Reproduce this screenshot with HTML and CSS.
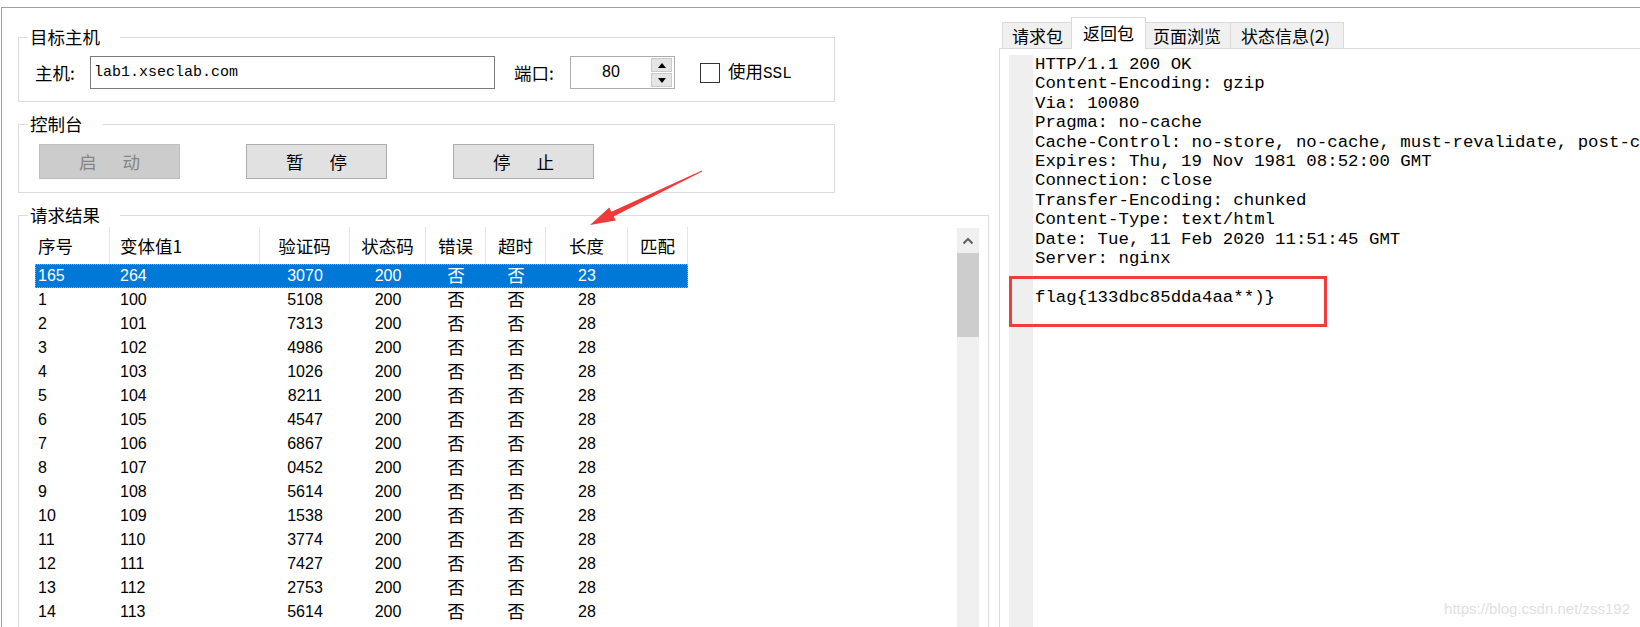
FILE: index.html
```html
<!DOCTYPE html>
<html lang="zh-CN">
<head>
    <meta charset="UTF-8">
    <title>验证码识别爆破</title>
    <link rel="stylesheet" href="styles.css">
</head>
<body>
    <div class="window">
        <div class="left">
            <div class="group group-host">
                <span class="group-title">目标主机</span>
                <div class="host-row">
                    <span class="label host-label">主机:</span>
                    <div class="textbox">lab1.xseclab.com</div>
                    <span class="label port-label">端口:</span>
                    <div class="spin">
                        <span class="spin-value">80</span>
                        <div class="spin-btns">
                            <span class="spin-btn"><svg width="8" height="5" viewBox="0 0 8 5"><path d="M0 5 L4 0 L8 5 Z" fill="#000"/></svg></span>
                            <span class="spin-btn"><svg width="8" height="5" viewBox="0 0 8 5"><path d="M0 0 L8 0 L4 5 Z" fill="#000"/></svg></span>
                        </div>
                    </div>
                    <span class="checkbox"></span>
                    <span class="label ssl-label">使用<span class="latin">SSL</span></span>
                </div>
            </div>

            <div class="group group-console">
                <span class="group-title">控制台</span>
                <div class="btn-row">
                    <button class="btn" disabled><span>启</span><span>动</span></button>
                    <button class="btn"><span>暂</span><span>停</span></button>
                    <button class="btn"><span>停</span><span>止</span></button>
                </div>
            </div>

            <div class="group group-result">
                <span class="group-title">请求结果</span>
                <div class="list">
                    <div class="grid">
                        <div class="row head">
                            <div class="c">序号</div><div class="c">变体值1</div><div class="c">验证码</div><div class="c">状态码</div><div class="c">错误</div><div class="c">超时</div><div class="c">长度</div><div class="c">匹配</div>
                        </div>
                        <div class="row sel">
                            <div class="c">165</div><div class="c">264</div><div class="c">3070</div><div class="c">200</div><div class="c">否</div><div class="c">否</div><div class="c">23</div><div class="c"></div>
                        </div>
                        <div class="row"><div class="c">1</div><div class="c">100</div><div class="c">5108</div><div class="c">200</div><div class="c">否</div><div class="c">否</div><div class="c">28</div><div class="c"></div></div>
                        <div class="row"><div class="c">2</div><div class="c">101</div><div class="c">7313</div><div class="c">200</div><div class="c">否</div><div class="c">否</div><div class="c">28</div><div class="c"></div></div>
                        <div class="row"><div class="c">3</div><div class="c">102</div><div class="c">4986</div><div class="c">200</div><div class="c">否</div><div class="c">否</div><div class="c">28</div><div class="c"></div></div>
                        <div class="row"><div class="c">4</div><div class="c">103</div><div class="c">1026</div><div class="c">200</div><div class="c">否</div><div class="c">否</div><div class="c">28</div><div class="c"></div></div>
                        <div class="row"><div class="c">5</div><div class="c">104</div><div class="c">8211</div><div class="c">200</div><div class="c">否</div><div class="c">否</div><div class="c">28</div><div class="c"></div></div>
                        <div class="row"><div class="c">6</div><div class="c">105</div><div class="c">4547</div><div class="c">200</div><div class="c">否</div><div class="c">否</div><div class="c">28</div><div class="c"></div></div>
                        <div class="row"><div class="c">7</div><div class="c">106</div><div class="c">6867</div><div class="c">200</div><div class="c">否</div><div class="c">否</div><div class="c">28</div><div class="c"></div></div>
                        <div class="row"><div class="c">8</div><div class="c">107</div><div class="c">0452</div><div class="c">200</div><div class="c">否</div><div class="c">否</div><div class="c">28</div><div class="c"></div></div>
                        <div class="row"><div class="c">9</div><div class="c">108</div><div class="c">5614</div><div class="c">200</div><div class="c">否</div><div class="c">否</div><div class="c">28</div><div class="c"></div></div>
                        <div class="row"><div class="c">10</div><div class="c">109</div><div class="c">1538</div><div class="c">200</div><div class="c">否</div><div class="c">否</div><div class="c">28</div><div class="c"></div></div>
                        <div class="row"><div class="c">11</div><div class="c">110</div><div class="c">3774</div><div class="c">200</div><div class="c">否</div><div class="c">否</div><div class="c">28</div><div class="c"></div></div>
                        <div class="row"><div class="c">12</div><div class="c">111</div><div class="c">7427</div><div class="c">200</div><div class="c">否</div><div class="c">否</div><div class="c">28</div><div class="c"></div></div>
                        <div class="row"><div class="c">13</div><div class="c">112</div><div class="c">2753</div><div class="c">200</div><div class="c">否</div><div class="c">否</div><div class="c">28</div><div class="c"></div></div>
                        <div class="row"><div class="c">14</div><div class="c">113</div><div class="c">5614</div><div class="c">200</div><div class="c">否</div><div class="c">否</div><div class="c">28</div><div class="c"></div></div>
                    </div>
                    <div class="scrollbar">
                        <div class="sb-up"><svg width="12" height="8" viewBox="0 0 12 8"><polyline points="1.5,6.5 6,2 10.5,6.5" fill="none" stroke="#606060" stroke-width="2"/></svg></div>
                        <div class="sb-thumb"></div>
                    </div>
                </div>
            </div>
        </div>

        <div class="right">
            <div class="tabs">
                <div class="tab">请求包</div>
                <div class="tab active">返回包</div>
                <div class="tab">页面浏览</div>
                <div class="tab tab-wide">状态信息(2)</div>
            </div>
            <div class="panel">
                <div class="editor">
                    <div class="gutter"></div>
<pre class="code">HTTP/1.1 200 OK
Content-Encoding: gzip
Via: 10080
Pragma: no-cache
Cache-Control: no-store, no-cache, must-revalidate, post-c
Expires: Thu, 19 Nov 1981 08:52:00 GMT
Connection: close
Transfer-Encoding: chunked
Content-Type: text/html
Date: Tue, 11 Feb 2020 11:51:45 GMT
Server: nginx

flag{133dbc85dda4aa**)}</pre>
                </div>
                <div class="mark"></div>
            </div>
        </div>
    </div>

    <svg class="arrow" width="130" height="75" viewBox="580 160 130 75">
        <polygon points="701.8,170.5 611.4,211.8 609.2,207.6 590,225 615.8,220.6 613.6,216.4 702.2,171.5" fill="#f03a3a"/>
    </svg>
    <div class="watermark">https://blog.csdn.net/zss192</div>
</body>
</html>
```

FILE: styles.css
```css
* {
    box-sizing: border-box;
}
body {
    margin: 0;
    height: 627px;
    overflow: hidden;
    position: relative;
    background-color: #fff;
    color: #000;
    font-family: "Noto Sans CJK SC", sans-serif;
    font-size: 17.5px;
}
.window {
    display: flex;
    height: 620px;
    margin: 7px 0 0 1px;
    border-top: 1px solid #a0a0a0;
    border-left: 1px solid #a0a0a0;
}

/* left side */
.left {
    width: 997px;
    flex: none;
    padding-top: 29px;
}
.group {
    position: relative;
    margin-left: 16px;
    border: 1px solid #dcdcdc;
}
.group-title {
    position: absolute;
    top: -11px;
    left: 9px;
    padding: 0 20px 0 2px;
    line-height: 20px;
    background-color: #fff;
}
.group-host {
    width: 817px;
    height: 65px;
    padding: 18px 0 0 16px;
}
.host-row {
    display: flex;
    align-items: center;
    height: 33px;
}
.label {
    line-height: 20px;
    white-space: nowrap;
}
.host-label {
    width: 55px;
}
.textbox {
    width: 405px;
    height: 33px;
    border: 1px solid #7a7a7a;
    padding-left: 3px;
    font-family: "Liberation Mono", monospace;
    font-size: 15px;
    line-height: 31px;
}
.port-label {
    width: 56px;
    margin-left: 19px;
}
.spin {
    display: flex;
    width: 105px;
    height: 33px;
    border: 1px solid #acacac;
}
.spin-value {
    flex: 1;
    text-align: center;
    font-family: "Liberation Sans", sans-serif;
    font-size: 16px;
    line-height: 29px;
}
.spin-btns {
    display: flex;
    flex-direction: column;
    gap: 1px;
    width: 21px;
    margin: 1px 2px 1px 0;
}
.spin-btn {
    flex: 1;
    display: flex;
    align-items: center;
    justify-content: center;
    background-color: #e5e5e5;
    border: 1px solid #cacaca;
}
.checkbox {
    width: 20px;
    height: 20px;
    margin-left: 25px;
    border: 1px solid #333;
    background-color: #fff;
}
.ssl-label {
    margin-left: 8px;
}
.latin {
    font-family: "Liberation Mono", monospace;
    font-size: 16px;
}
.group-console {
    width: 817px;
    height: 69px;
    margin-top: 22px;
    padding: 19px 0 0 20px;
}
.btn-row {
    display: flex;
    gap: 66px;
}
.btn {
    display: flex;
    align-items: center;
    justify-content: center;
    gap: 26px;
    width: 141px;
    height: 35px;
    padding: 0;
    border: 1px solid #adadad;
    background-color: #e1e1e1;
    color: #000;
    font-family: inherit;
    font-size: 17.5px;
}
.btn:disabled {
    background-color: #cccccc;
    border-color: #bfbfbf;
    color: #858585;
}
.group-result {
    width: 971px;
    height: 430px;
    margin-top: 22px;
    padding: 11px 9px 0 16px;
}
.list {
    display: flex;
    height: 100%;
}
.grid {
    flex: 1;
}
.row {
    display: grid;
    grid-template-columns: 75px 150px 90px 76px 60px 60px 82px 60px;
    width: 653px;
    height: 24px;
    align-items: center;
    font-family: "Liberation Sans", "Noto Sans CJK SC", sans-serif;
    font-size: 16px;
}
.row .c {
    text-align: center;
    white-space: nowrap;
}
.row .c:nth-child(1) {
    text-align: left;
    padding-left: 3px;
}
.row .c:nth-child(2) {
    text-align: left;
    padding-left: 10px;
}
.row .c:nth-child(5), .row .c:nth-child(6) {
    font-size: 17.5px;
    line-height: 20px;
}
.row.head {
    height: 37px;
    font-family: "Noto Sans CJK SC", sans-serif;
    font-size: 17.5px;
}
.row.head .c {
    height: 100%;
    line-height: 37px;
    border-right: 1px solid #e5e5e5;
}
.row.sel {
    background-color: #0078d7;
    color: #fff;
    outline: 1px dotted #e8a04c;
    outline-offset: -1px;
}
.scrollbar {
    flex: none;
    width: 22px;
    margin-top: 1px;
    background-color: #f0f0f0;
}
.sb-up {
    display: flex;
    align-items: center;
    justify-content: center;
    height: 25px;
}
.sb-thumb {
    height: 84px;
    background-color: #cdcdcd;
}

/* right side */
.right {
    flex: 1;
    min-width: 0;
    overflow: hidden;
    padding-top: 9px;
}
.tabs {
    display: flex;
    align-items: flex-end;
    height: 31px;
    margin-left: 3px;
}
.tab {
    height: 26px;
    padding: 1px 9px 0;
    margin-left: -1px;
    border: 1px solid #d9d9d9;
    border-bottom: none;
    background-color: #f0f0f0;
    font-size: 17px;
    line-height: 24px;
    white-space: nowrap;
}
.tab:first-child {
    margin-left: 0;
}
.tab-wide {
    padding: 1px 13px 0 10px;
}
.tab.active {
    position: relative;
    z-index: 1;
    height: 32px;
    margin: 0 -2px -1px -2px;
    padding: 0 11px;
    background-color: #fff;
    line-height: 30px;
}
.panel {
    position: relative;
    width: 700px;
    height: 600px;
    padding: 6px 0 0 9px;
    border: 1px solid #d9d9d9;
    background-color: #fff;
}
.editor {
    display: flex;
    height: 100%;
}
.gutter {
    flex: none;
    width: 24px;
    background-color: #efefef;
}
.code {
    margin: 0 0 0 2px;
    font-family: "Liberation Mono", monospace;
    font-size: 17.4px;
    line-height: 19.4px;
    white-space: pre;
}
.mark {
    position: absolute;
    left: 9px;
    top: 227px;
    width: 318px;
    height: 51px;
    border: 3px solid #f03c3c;
}

/* annotations */
.arrow {
    position: absolute;
    left: 580px;
    top: 160px;
}
.watermark {
    position: absolute;
    right: 10px;
    top: 600px;
    font-family: "Liberation Sans", sans-serif;
    font-size: 15px;
    color: #e0e0e0;
}
```
